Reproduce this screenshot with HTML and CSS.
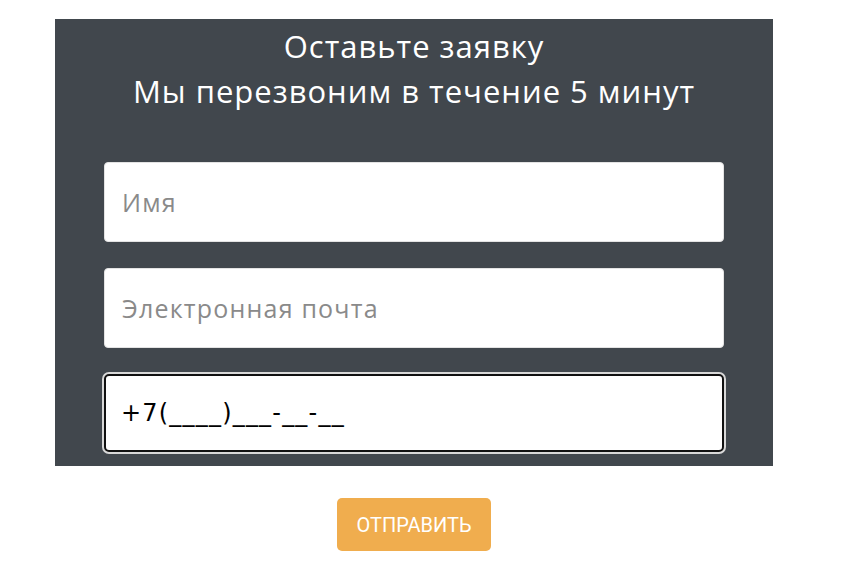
FILE: index.html
```html
<!DOCTYPE html>
<html lang="ru">
<head>
  <meta charset="UTF-8" />
  <title>Оставьте заявку</title>
  <link rel="stylesheet" href="styles.css">
</head>
<body>
  <div class="callback">
    <form class="callback-form">
      <h2 class="callback-title">Оставьте заявку<br>Мы перезвоним в течение 5 минут</h2>
      <input class="field" type="text" placeholder="Имя">
      <input class="field" type="email" placeholder="Электронная почта">
      <input class="field field-phone" type="tel" value="+7(____)___-__-__">
    </form>
    <div class="callback-actions">
      <button class="send-btn" type="button">ОТПРАВИТЬ</button>
    </div>
  </div>
</body>
</html>
```

FILE: styles.css
```css
body {
  margin: 0;
  background-color: white;
  font-family: "Open Sans", sans-serif;
}

.callback {
  width: 718px;
  margin: 19px 0 0 55px;
}

.callback-form {
  display: flex;
  flex-direction: column;
  align-items: center;
  gap: 26px;
  height: 447px;
  box-sizing: border-box;
  padding: 5px 49px 0;
  background-color: #41474d;
  overflow: hidden;
}

.callback-title {
  margin: 0 0 22px;
  font-weight: 400;
  font-size: 31px;
  line-height: 45px;
  letter-spacing: 1px;
  color: white;
  text-align: center;
}

.field {
  width: 620px;
  height: 80px;
  flex-shrink: 0;
  box-sizing: border-box;
  padding: 0 17px;
  border: 1px solid #e3e3e3;
  border-radius: 4px;
  background: white;
  font-family: "Open Sans", sans-serif;
  font-size: 25px;
  letter-spacing: 1.2px;
  color: #222;
  outline: none;
}

.field::placeholder {
  color: #8a8a8a;
}

.field-phone {
  height: 78px;
  border: 2px solid #111;
  box-shadow: 0 0 0 2px #d8d8d8;
  border-radius: 5px;
  padding: 0 15px;
  font-family: "DejaVu Sans", sans-serif;
  font-size: 24px;
  letter-spacing: 1.2px;
  color: black;
}

.callback-actions {
  display: flex;
  justify-content: center;
  padding-top: 32px;
}

.send-btn {
  width: 154px;
  height: 53px;
  border: none;
  border-radius: 5px;
  background-color: #f0ad4e;
  color: white;
  font-family: Roboto, sans-serif;
  font-size: 20px;
  cursor: pointer;
}
```
